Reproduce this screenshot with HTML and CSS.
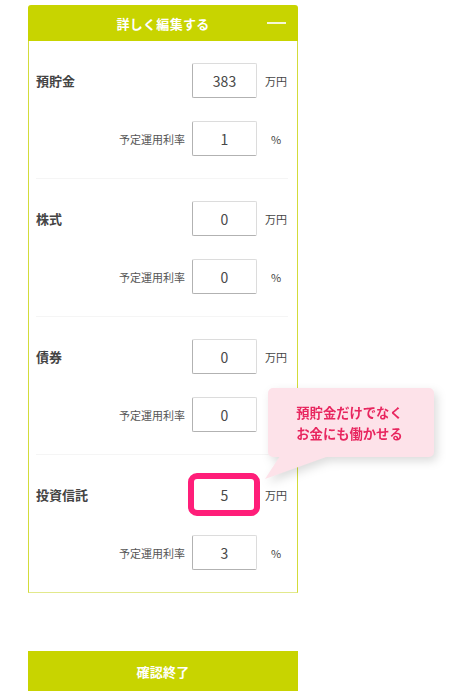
FILE: index.html
```html
<!DOCTYPE html>
<html lang="ja">
<head>
<meta charset="utf-8">
<title>詳しく編集する</title>
<link rel="stylesheet" href="styles.css">
</head>
<body>
<div class="page">
  <div class="panel">
    <div class="panel-head">
      <span class="title">詳しく編集する</span>
      <span class="toggle"></span>
    </div>
    <div class="panel-body">
      <section class="asset">
        <div class="row"><span class="label">預貯金</span><div class="field">383</div><span class="unit">万円</span></div>
        <div class="row sub"><span class="sublabel">予定運用利率</span><div class="field">1</div><span class="unit">%</span></div>
      </section>
      <section class="asset">
        <div class="row"><span class="label">株式</span><div class="field">0</div><span class="unit">万円</span></div>
        <div class="row sub"><span class="sublabel">予定運用利率</span><div class="field">0</div><span class="unit">%</span></div>
      </section>
      <section class="asset">
        <div class="row"><span class="label">債券</span><div class="field">0</div><span class="unit">万円</span></div>
        <div class="row sub"><span class="sublabel">予定運用利率</span><div class="field">0</div><span class="unit">%</span></div>
      </section>
      <section class="asset">
        <div class="row"><span class="label">投資信託</span><div class="field highlight">5</div><span class="unit">万円</span></div>
        <div class="row sub"><span class="sublabel">予定運用利率</span><div class="field">3</div><span class="unit">%</span></div>
      </section>
    </div>
  </div>
  <button class="done" type="button">確認終了</button>
  <div class="tip">
    <span>預貯金だけでなく</span>
    <span>お金にも働かせる</span>
    <svg class="tail" width="66" height="24" viewBox="0 0 66 24"><polygon points="15,0 64,0 0,23" fill="#fde2e9"/></svg>
  </div>
</div>
</body>
</html>
```

FILE: styles.css
```css
html, body {
  margin: 0;
  padding: 0;
  background: #fff;
}
body {
  font-family: "Noto Sans CJK JP", "Noto Sans", sans-serif;
  color: #333;
}
.page {
  position: relative;
  width: 270px;
  padding: 5px 0 0 28px;
}
.panel {
  width: 270px;
}
.panel-head {
  height: 36px;
  background: #c8d400;
  border-radius: 3px 3px 0 0;
  display: grid;
  grid-template-columns: 1fr auto 1fr;
  align-items: center;
  color: #fff;
  font-size: 13px;
  font-weight: 700;
  letter-spacing: 0.3px;
}
.title {
  grid-column: 2;
}
.toggle {
  grid-column: 3;
  justify-self: end;
  width: 19px;
  height: 1.5px;
  margin-right: 12px;
  background: #f6f8d6;
}
.panel-body {
  border: 1px solid #d3dc3a;
  border-top: 0;
  border-bottom-color: #e2e98c;
  padding: 0 9px 0 7px;
}
.asset {
  display: flex;
  flex-direction: column;
  gap: 23px;
  padding: 22px 0;
  border-bottom: 1px solid #f5f5f5;
}
.asset:last-child {
  border-bottom: 0;
}
.row {
  display: flex;
  align-items: center;
}
.row.sub {
  justify-content: flex-end;
}
.label {
  flex: 1;
  font-size: 13px;
  font-weight: 700;
  color: #444;
}
.sublabel {
  margin-right: 7px;
  font-size: 11px;
  color: #555;
}
.field {
  position: relative;
  box-sizing: border-box;
  width: 65px;
  height: 35px;
  border: 1px solid #dcdcdc;
  border-left-color: #b2b2b2;
  border-bottom-color: #b2b2b2;
  border-radius: 2px;
  display: flex;
  align-items: center;
  justify-content: center;
  font-size: 14px;
  color: #484848;
  background: #fff;
}
.field.highlight::after {
  content: "";
  position: absolute;
  top: -5px;
  bottom: -5px;
  left: -5px;
  right: -4px;
  border: 6px solid #ff1e79;
  border-radius: 9px;
}
.unit {
  width: 24px;
  margin-left: 7px;
  text-align: center;
  font-size: 11px;
  color: #444;
}
.done {
  display: block;
  width: 270px;
  height: 40px;
  margin: 58px 0 0;
  padding: 0;
  border: 0;
  background: #c8d400;
  color: #fff;
  font-family: "Noto Sans CJK JP", "Noto Sans", sans-serif;
  font-size: 13px;
  font-weight: 700;
  letter-spacing: 0.3px;
}
.tip {
  position: absolute;
  left: 268px;
  top: 388px;
  box-sizing: border-box;
  width: 166px;
  height: 69px;
  border-radius: 5px;
  background: #fde2e9;
  color: #e8265f;
  font-size: 13.3px;
  font-weight: 700;
  line-height: 21px;
  display: flex;
  flex-direction: column;
  align-items: center;
  justify-content: center;
  padding-right: 3px;
  filter: drop-shadow(3px 4px 5px rgba(0, 0, 0, 0.14));
}
.tail {
  position: absolute;
  left: -3px;
  top: 68px;
}
```
